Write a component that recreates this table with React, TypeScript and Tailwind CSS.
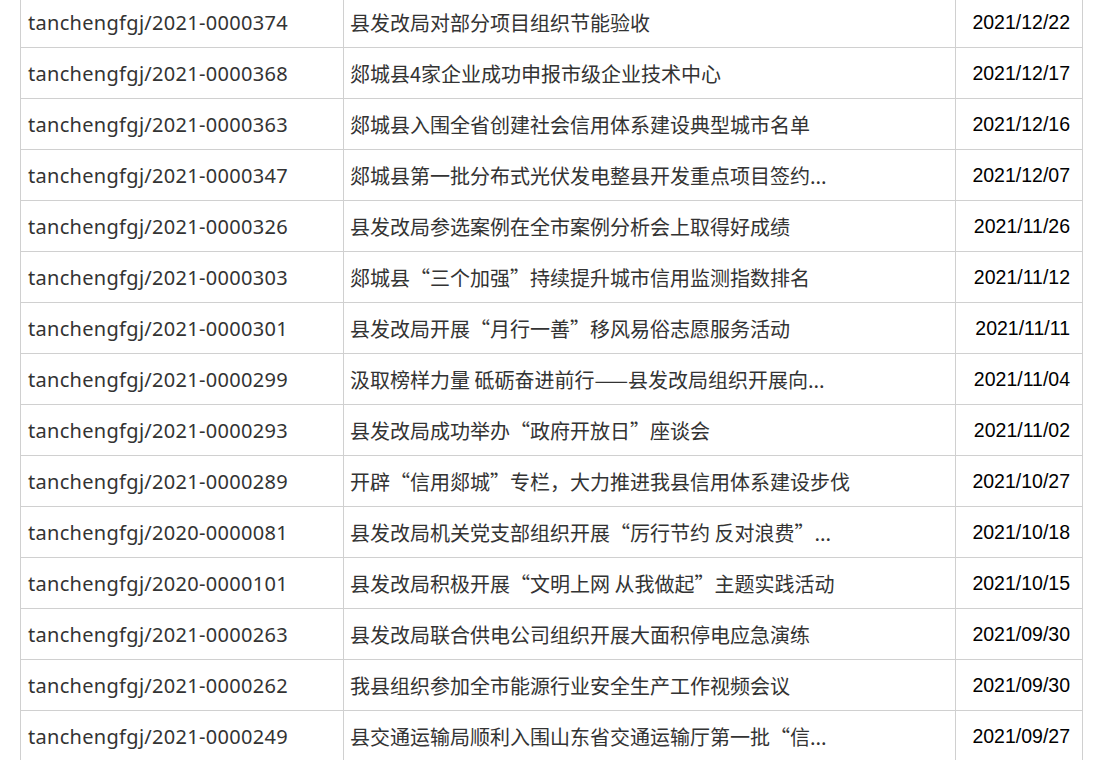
const rows = [
  ['tanchengfgj/2021-0000374', '县发改局对部分项目组织节能验收', '2021/12/22'],
  ['tanchengfgj/2021-0000368', '郯城县4家企业成功申报市级企业技术中心', '2021/12/17'],
  ['tanchengfgj/2021-0000363', '郯城县入围全省创建社会信用体系建设典型城市名单', '2021/12/16'],
  ['tanchengfgj/2021-0000347', '郯城县第一批分布式光伏发电整县开发重点项目签约...', '2021/12/07'],
  ['tanchengfgj/2021-0000326', '县发改局参选案例在全市案例分析会上取得好成绩', '2021/11/26'],
  ['tanchengfgj/2021-0000303', '郯城县“三个加强”持续提升城市信用监测指数排名', '2021/11/12'],
  ['tanchengfgj/2021-0000301', '县发改局开展“月行一善”移风易俗志愿服务活动', '2021/11/11'],
  ['tanchengfgj/2021-0000299', '汲取榜样力量 砥砺奋进前行——县发改局组织开展向...', '2021/11/04'],
  ['tanchengfgj/2021-0000293', '县发改局成功举办“政府开放日”座谈会', '2021/11/02'],
  ['tanchengfgj/2021-0000289', '开辟“信用郯城”专栏，大力推进我县信用体系建设步伐', '2021/10/27'],
  ['tanchengfgj/2020-0000081', '县发改局机关党支部组织开展“厉行节约 反对浪费”...', '2021/10/18'],
  ['tanchengfgj/2020-0000101', '县发改局积极开展“文明上网 从我做起”主题实践活动', '2021/10/15'],
  ['tanchengfgj/2021-0000263', '县发改局联合供电公司组织开展大面积停电应急演练', '2021/09/30'],
  ['tanchengfgj/2021-0000262', '我县组织参加全市能源行业安全生产工作视频会议', '2021/09/30'],
  ['tanchengfgj/2021-0000249', '县交通运输局顺利入围山东省交通运输厅第一批“信...', '2021/09/27'],
];

export default function App() {
  return (
    <div className="h-[760px] overflow-hidden bg-white pl-5">
      <table className="-mt-[4px] w-[1062px] table-fixed border-collapse [font-family:'Noto_Sans_CJK_SC',sans-serif] text-[20px] text-[#333]">
        <colgroup>
          <col className="w-[323px]" />
          <col className="w-[612px]" />
          <col className="w-[127px]" />
        </colgroup>
        <tbody>
          {rows.map(([code, title, date]) => (
            <tr key={code + date} className="h-[51px]">
              <td className="border border-[#d0d0d0] pl-[7px] pt-[2px] whitespace-nowrap [font-family:'Noto_Sans',sans-serif] tracking-[0.3px]">
                {code}
              </td>
              <td className="border border-[#d0d0d0] pl-[6px] pt-[2px] whitespace-nowrap overflow-hidden">{title}</td>
              <td className="border border-[#d0d0d0] pr-3 pt-[2px] text-right [font-family:'Liberation_Sans',sans-serif] text-[19.5px] text-black">
                {date}
              </td>
            </tr>
          ))}
        </tbody>
      </table>
    </div>
  );
}
